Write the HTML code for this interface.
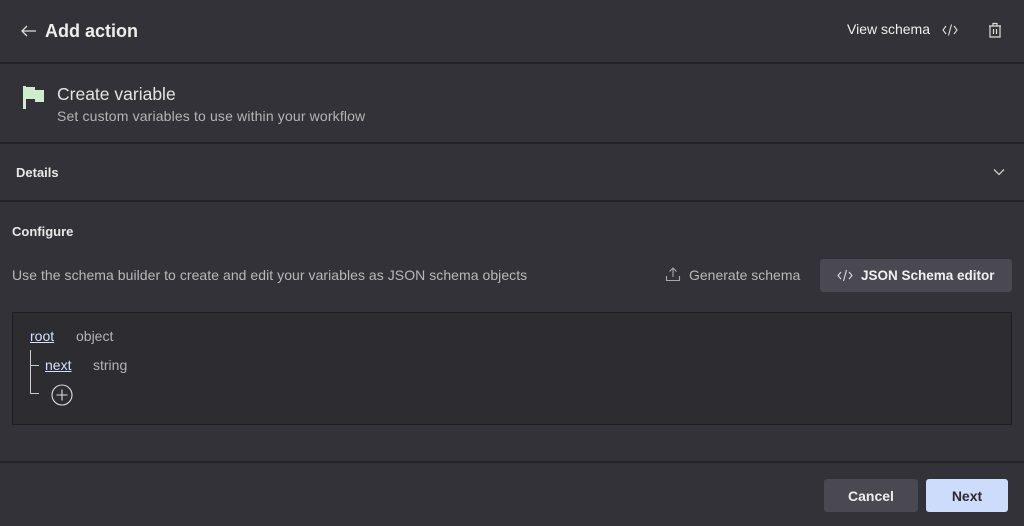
<!DOCTYPE html>
<html><head><style>
*{margin:0;padding:0;box-sizing:border-box}
body{width:1024px;height:526px;background:#333238;font-family:"Liberation Sans",sans-serif;color:#e8e8ea;position:relative;overflow:hidden}
.a{position:absolute}
.hr{position:absolute;left:0;width:1024px;height:2px;background:#232227}
</style></head><body>
<svg class="a" style="left:20px;top:24px" width="18" height="14" viewBox="0 0 18 14"><path d="M16 7H2M7 2L2 7l5 5" stroke="#ddd" stroke-width="1.3" fill="none"/></svg>
<div class="a" style="left:45px;top:21px;font-size:18px;font-weight:bold;color:#eee">Add action</div>
<div class="a" style="left:847px;top:21px;font-size:14px;color:#eee">View schema</div>
<svg class="a" style="left:942px;top:23px" width="16" height="14" viewBox="0 0 16 14"><path d="M4 3L1 7l3 4M12 3l3 4-3 4M9.5 1.5L6.5 12.5" stroke="#ddd" stroke-width="1.1" fill="none"/></svg>
<svg class="a" style="left:988px;top:22px" width="14" height="16" viewBox="0 0 14 16"><path d="M2 4h10v11H2zM1 4h12M5 4V1.5h4V4M5.5 7v5M8.5 7v5" stroke="#ddd" stroke-width="1.2" fill="none"/></svg>
<div class="hr" style="top:62px"></div>
<svg class="a" style="left:23px;top:86px" width="22" height="24" viewBox="0 0 22 24"><path d="M0 0h3v23H0z" fill="#cfeccd"/><path d="M3 1h9v3h9v12h-9v-3H3z" fill="#cfeccd"/></svg>
<div class="a" style="left:57px;top:84px;font-size:17.5px;color:#e4e4e6">Create variable</div>
<div class="a" style="left:57px;top:108px;font-size:14px;color:#b4b4b8;letter-spacing:0.15px">Set custom variables to use within your workflow</div>
<div class="hr" style="top:142px"></div>
<div class="a" style="left:16px;top:165px;font-size:13px;font-weight:bold">Details</div>
<svg class="a" style="left:993px;top:168px" width="12" height="8" viewBox="0 0 12 8"><path d="M1 1.5l5 5 5-5" stroke="#ccc" stroke-width="1.3" fill="none"/></svg>
<div class="hr" style="top:200px"></div>
<div class="a" style="left:12px;top:224px;font-size:13px;font-weight:bold">Configure</div>
<div class="a" style="left:12px;top:267px;font-size:14px;color:#b8b8bc;letter-spacing:0.05px">Use the schema builder to create and edit your variables as JSON schema objects</div>
<svg class="a" style="left:665px;top:266px" width="16" height="16" viewBox="0 0 16 16"><path d="M8 11V2M4.5 5.5L8 2l3.5 3.5M1.5 10v4.5h13V10" stroke="#aaa" stroke-width="1.1" fill="none"/></svg>
<div class="a" style="left:689px;top:267px;font-size:14px;color:#b8b8bc">Generate schema</div>
<div class="a" style="left:820px;top:259px;width:192px;height:33px;background:#4a4951;border-radius:3px"></div>
<svg class="a" style="left:837px;top:269px" width="16" height="13" viewBox="0 0 16 13"><path d="M4 3L1 6.5 4 10M12 3l3 3.5-3 3.5M9.5 1L6.5 12" stroke="#ddd" stroke-width="1.1" fill="none"/></svg>
<div class="a" style="left:861px;top:268px;font-size:13.5px;font-weight:bold;color:#f0f0f2">JSON Schema editor</div>
<div class="a" style="left:12px;top:312px;width:1000px;height:113px;background:#2d2c31;border:1px solid #1e1d22"></div>
<div class="a" style="left:30px;top:328px;font-size:14px;color:#d6e0ff;text-decoration:underline">root</div>
<div class="a" style="left:76px;top:328px;font-size:14px;color:#b4b4b8">object</div>
<div class="a" style="left:30px;top:350px;width:1px;height:44px;background:#ccc"></div>
<div class="a" style="left:30px;top:365px;width:9px;height:1px;background:#ccc"></div>
<div class="a" style="left:30px;top:393px;width:9px;height:1px;background:#ccc"></div>
<div class="a" style="left:45px;top:357px;font-size:14px;color:#d6e0ff;text-decoration:underline">next</div>
<div class="a" style="left:93px;top:357px;font-size:14px;color:#b4b4b8">string</div>
<svg class="a" style="left:50px;top:384px" width="24" height="24" viewBox="0 0 24 24"><circle cx="12" cy="11" r="10" stroke="#ddd" stroke-width="1.1" fill="none"/><path d="M12 5.5v11M6.5 11h11" stroke="#ddd" stroke-width="1.1"/></svg>
<div class="hr" style="top:461px"></div>
<div class="a" style="left:824px;top:479px;width:94px;height:33px;background:#4a4951;border-radius:3px;font-size:14px;font-weight:bold;color:#eee;text-align:center;line-height:34px">Cancel</div>
<div class="a" style="left:926px;top:479px;width:82px;height:33px;background:#cddcfb;border-radius:3px;font-size:14px;font-weight:bold;color:#2a2a30;text-align:center;line-height:34px">Next</div>
</body></html>
